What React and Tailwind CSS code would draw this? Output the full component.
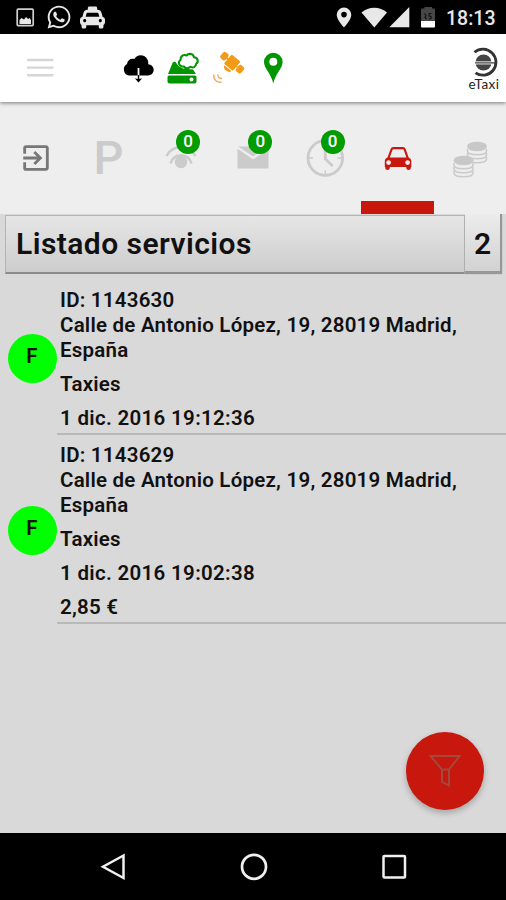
import { FaWhatsapp, FaTaxi } from 'react-icons/fa'
import { MdExitToApp } from 'react-icons/md'

const services = [
    { id: '1143630', address: 'Calle de Antonio López, 19, 28019 Madrid, España', company: 'Taxies', date: '1 dic. 2016 19:12:36' },
    { id: '1143629', address: 'Calle de Antonio López, 19, 28019 Madrid, España', company: 'Taxies', date: '1 dic. 2016 19:02:38', price: '2,85 €' },
]

const StatusBar = () => (
    <div className="flex h-[34px] shrink-0 items-center bg-black pl-4 pr-[10px] text-[#e8e8e8]">
        <svg className="h-[19px] w-[19px]" viewBox="16 8 19 19">
            <rect x="17.2" y="9.2" width="16" height="16.4" rx="1" fill="none" stroke="#d0d0d0" strokeWidth="1.7" />
            <path d="M19.5 24v-4l2-2 2.5 1.5 2-2.5 2 2 1.500-1 1.500 2v4z" fill="#e8e8e8" />
        </svg>
        <FaWhatsapp className="ml-[11px]" size={26} />
        <FaTaxi className="ml-[8px]" size={25} />
        <svg className="ml-auto h-[22px] w-[16px]" viewBox="337 6 16 22">
            <path fillRule="evenodd" d="M345 7.500a7.300 7.300 0 0 0-7.300 7.300c0 5.200 7.300 12.700 7.300 12.700s7.300-7.500 7.300-12.700A7.300 7.300 0 0 0 345 7.500zm0 4.300a2.800 2.800 0 1 1 0 5.600 2.800 2.800 0 0 1 0-5.600z" fill="#e8e8e8" />
        </svg>
        <svg className="ml-[9px] h-[22px] w-[26px]" viewBox="362 6 26 22">
            <path d="M362.500 12.500a19.500 19.500 0 0 1 25.500 0L375.300 27.500z" fill="#e8e8e8" />
        </svg>
        <svg className="ml-[2px] h-[22px] w-[21px]" viewBox="390 6 21 22">
            <path d="M410.300 7v20.300H390.300z" fill="#e8e8e8" />
        </svg>
        <svg className="ml-[11px] h-[22px] w-[15px]" viewBox="422 6 15 22">
            <path d="M422 9.500q0-1 1-1h2.500V7h7.500v1.500h2q1 0 1 1V21h-14z" fill="#464646" />
            <path d="M422 21h14v5.500q0 1-1 1h-12q-1 0-1-1z" fill="#fff" />
            <path d="M425.500 13.500l1.500 2-1 2 1.500 1.500M430 13.500h2.500M430 13.500v2.500l2 .5v2l-2 .5" fill="none" stroke="#111" strokeWidth="1.100" />
        </svg>
        <span className="ml-[10px] mt-[3px] w-[50px] whitespace-nowrap text-[19.500px] font-medium leading-[34px]">18:13</span>
    </div>
)

const Header = () => (
    <header className="z-10 flex h-[68px] shrink-0 items-center bg-white shadow-[0_1px_4px_rgba(0,0,0,0.5)]">
        <svg className="ml-[27px] h-9 w-[27px]" viewBox="27 50 27 36">
            <path d="M27 60h26.500M27 67.600h26.500M27 75.200h26.500" stroke="#d6d6d6" strokeWidth="2.400" />
        </svg>
        <svg className="ml-[68px] h-9 w-9" viewBox="122 50 36 36">
            <path d="M129 75.500a6.200 6.200 0 0 1-2-11.500c.5-4 4-6 7.500-5 2-5 10.500-5.300 13 .8 1 2 .8 3.200.7 4.400 3 .3 5.500 2.500 5.500 5.600 0 3.500-2.700 5.700-5.700 5.700z" fill="#000" />
            <path d="M138.500 68v9" stroke="#fff" strokeWidth="1.800" />
            <path d="M138.500 75v6.500" stroke="#000" strokeWidth="1.500" />
            <path d="M134.800 78.200l3.700 4.300 3.700-4.300-3.700 1z" fill="#000" />
        </svg>
        <svg className="ml-[8px] h-9 w-9" viewBox="166 50 36 36">
            <path d="M172.500 63q1-2 3-1l3 4 4.500 2.500 10 1 3 4.500h-28z" fill="#009600" />
            <path d="M169 75.500h26q1.500 0 1.500 1.500v4.600q0 2-2 2h-25q-2 0-2-2v-4.600q0-1.500 1.500-1.500z" fill="#009600" />
            <circle cx="191.500" cy="79.500" r="2" fill="#fff" />
            <path d="M182 66.500c-3-.5-4.500-4.500-1.500-6.500 0-4 3-6 6-4.500 2.500-3 7-1.500 7.500 1.800 4 .2 5 4.700 2 6.700 0 3-3 4.300-5.500 2.800-2 2-5.500 2-6.500-.3z" fill="#fff" stroke="#009600" strokeWidth="2.100" strokeLinejoin="round" />
        </svg>
        <svg className="ml-[9px] h-9 w-9" viewBox="211 50 36 36" fill="#f39a17">
            <g transform="rotate(40 232 62.500)">
                <rect x="226.500" y="56.500" width="11.500" height="12" rx="1" />
                <rect x="218.800" y="58.500" width="6.500" height="8" rx="2" />
                <rect x="239.200" y="58.500" width="6.500" height="8" rx="2" />
                <path d="M225 62.500h14" stroke="#f39a17" strokeWidth="2" />
                <path d="M228 69.500h9q-.5 3-4.500 3t-4.500-3z" />
            </g>
            <path d="M213.800 74.500c-.5 5 3 8.300 8 7.800M217.800 74.300c-.3 2.800 1.500 4.500 4.200 4.200" fill="none" stroke="#f0ad6a" strokeWidth="1.500" />
        </svg>
        <svg className="ml-[15px] h-9 w-[22px]" viewBox="262 50 22 36">
            <path fillRule="evenodd" d="M273.300 52.700a9.300 9.300 0 0 0-9.300 9.300c0 6.500 7 11 9.300 21.500 2.300-10.500 9.300-15 9.300-21.500a9.300 9.300 0 0 0-9.300-9.300zm0 5a4 4 0 1 1 0 8 4 4 0 0 1 0-8z" fill="#009600" />
        </svg>
        <div className="ml-auto mr-[4px] flex w-[36px] flex-col items-center">
            <svg className="h-[31px] w-[27px]" viewBox="471 46 27 31">
                <path d="M474.500 51.300a13 13 0 1 1 1 20.500" fill="none" stroke="#333" strokeWidth="2.800" />
                <circle cx="483.500" cy="61.500" r="8" fill="#444" />
                <path d="M474 61.900h20" stroke="#fff" strokeWidth="3" />
                <path d="M475 61.900h21" stroke="#333" strokeWidth="1.200" />
            </svg>
            <span className="font-['Lato'] text-[13.500px] leading-[12px] tracking-[0.5px] text-[#222]">eTaxi</span>
        </div>
    </header>
)

const Badge = () => (
    <span className="absolute left-[31.500px] top-[28px] flex h-6 w-6 items-center justify-center rounded-full bg-[#009c00] text-[17px] font-medium text-white">
        0
    </span>
)

const Tab = ({ children, active, badge }) => (
    <div className="relative flex h-full flex-col items-center justify-center">
        {children}
        {badge && <Badge />}
        {active && <div className="absolute inset-x-0 bottom-0 h-[13.500px] bg-[#c8170d]" />}
    </div>
)

const Coins = ({ x, y }) => (
    <g>
        {[12, 8, 4].map((dy) => (
            <path key={dy} d={`M${x} ${y + dy}v2c0 5 19 5 19 0v-2`} fill="#eee" stroke="#cacaca" strokeWidth="1.500" />
        ))}
        <ellipse cx={x + 9.5} cy={y + 1.5} rx="10" ry="4.800" fill="#c8c8c8" />
    </g>
)

const Tabs = () => (
    <nav className="grid h-[112px] shrink-0 grid-cols-7 bg-[#eee]">
        <Tab>
            <MdExitToApp size={34} color="#777" />
        </Tab>
        <Tab>
            <span className="text-[47px] font-medium leading-[60px] text-[#cbcbcb]">P</span>
        </Tab>
        <Tab badge>
            <svg className="h-[60px] w-[72px]" viewBox="145 128 72 60" fill="none" stroke="#cbcbcb" strokeWidth="2.500">
                <circle cx="181" cy="162" r="6.200" fill="#cbcbcb" stroke="none" />
                <path d="M170.500 163.500a10.800 10.800 0 0 1 21 0M166.500 156a16.500 16.500 0 0 1 29 0" />
            </svg>
        </Tab>
        <Tab badge>
            <svg className="h-[60px] w-[72px]" viewBox="217 128 72 60">
                <path d="M237.500 146.500h31v22h-31z" fill="#cbcbcb" />
                <path d="M237 147l16 11 16-11" fill="none" stroke="#eee" strokeWidth="2.200" />
            </svg>
        </Tab>
        <Tab badge>
            <svg className="h-[60px] w-[72px]" viewBox="289 128 72 60" fill="none" stroke="#cbcbcb" strokeWidth="2.800">
                <circle cx="325.300" cy="158" r="17.300" />
                <path d="M325.300 147v12l7.500 7" />
                <path d="M325.300 142v4M325.300 170.500v4M309 158h4M337.500 158h4" strokeWidth="1.500" />
            </svg>
        </Tab>
        <Tab active>
            <svg className="h-[60px] w-[72px]" viewBox="361.500 128 72 60">
                <path d="M387.800 158.500l3.200-9q.5-1.400 2-1.400h9.200q1.500 0 2 1.400l3.200 9" fill="none" stroke="#c8170d" strokeWidth="2.200" />
                <path fillRule="evenodd" d="M387.500 157.500h20q3.300.5 3.300 4v5.500h-.5v1q0 2-2.200 2t-2.300-2v-1h-16.500v1q0 2-2.300 2t-2.200-2v-1h-.5v-5.500q0-3.500 3.200-4zm.6 2.700a2.400 2.400 0 1 0 0 4.800 2.400 2.400 0 0 0 0-4.800zm19 0a2.400 2.400 0 1 0 0 4.800 2.400 2.400 0 0 0 0-4.800z" fill="#c8170d" />
            </svg>
        </Tab>
        <Tab>
            <svg className="h-[60px] w-[72px]" viewBox="434 128 72 60">
                <Coins x={467.500} y={145} />
                <Coins x={454} y={159} />
            </svg>
        </Tab>
    </nav>
)

const ServiceRow = ({ service }) => (
    <li className="flex">
        <div className="flex w-[57px] shrink-0 items-center pl-[7.500px] pt-[2px]">
            <span className="flex h-[49px] w-[49px] items-center justify-center rounded-full bg-[#00ff00] pb-[4px] text-[20.500px]">
                F
            </span>
        </div>
        <div className="flex flex-1 flex-col gap-[9px] border-b-2 border-[#b9b9b9] pb-[2px] pl-[3px] pr-8 pt-[8px]">
            <div>
                <p>ID: {service.id}</p>
                <p>{service.address}</p>
            </div>
            <p>{service.company}</p>
            <p className="tracking-[0.320px]">{service.date}</p>
            {service.price && <p>{service.price}</p>}
        </div>
    </li>
)

const NavigationBar = () => (
    <div className="flex h-[67px] shrink-0 items-center justify-between bg-black pl-[99px] pr-[98px]">
        <svg className="h-[30px] w-[28px]" viewBox="99 852 28 30" fill="none" stroke="#f0f0f0" strokeWidth="2.500">
            <path d="M123.500 855.500v22.500l-20.500-11.250z" />
        </svg>
        <svg className="h-[30px] w-[30px]" viewBox="238.500 852 30 30" fill="none" stroke="#f0f0f0" strokeWidth="2.700">
            <circle cx="253.500" cy="866.800" r="12" />
        </svg>
        <svg className="h-[30px] w-[28px]" viewBox="380 852 28 30" fill="none" stroke="#f0f0f0" strokeWidth="2.500">
            <rect x="383.500" y="856" width="21.500" height="21.500" rx="1" />
        </svg>
    </div>
)

const App = () => {
    return (
        <div className="flex h-[900px] w-[506px] flex-col overflow-hidden bg-[#d9d9d9] font-['Roboto',sans-serif] text-[#111]">
            <StatusBar />
            <Header />
            <Tabs />

            <main className="relative flex-1">
                {/* Title bar */}
                <div className="flex items-start pl-[5px] pr-[4px] text-[30px] font-semibold">
                    <h1 className="mt-px h-[59px] flex-1 border border-b-2 border-[#b4b4b4] border-b-[#8c8c8c] bg-linear-to-b from-[#e6e6e6] to-[#cdcdcd] pl-[10px] leading-[55px] tracking-[0.450px]">
                        Listado servicios
                    </h1>
                    <span className="h-[59px] w-[37px] border-b-2 border-r-2 border-[#979797] bg-linear-to-b from-[#ececec] to-[#d2d2d2] text-center leading-[59px] shadow-[0_1px_1px_#999]">
                        {services.length}
                    </span>
                </div>

                <ul className="mt-[6px] text-[20.500px] font-semibold leading-[25px] tracking-[0.230px]">
                    {services.map((service) => (
                        <ServiceRow key={service.id} service={service} />
                    ))}
                </ul>

                {/* Filter button */}
                <button className="absolute bottom-[23px] right-[22px] flex h-[78px] w-[78px] items-center justify-center rounded-full bg-[#c8170d] shadow-[0_3px_6px_rgba(0,0,0,0.25)]">
                    <svg className="h-[34px] w-[34px]" viewBox="428 754 34 34" fill="none" stroke="#a0493c" strokeWidth="2">
                        <path d="M430.500 756h29l-10.500 13.500v16l-7-3.500v-12.500zM442 769.500h7" />
                    </svg>
                </button>
            </main>

            <NavigationBar />
        </div>
    )
}

export default App
